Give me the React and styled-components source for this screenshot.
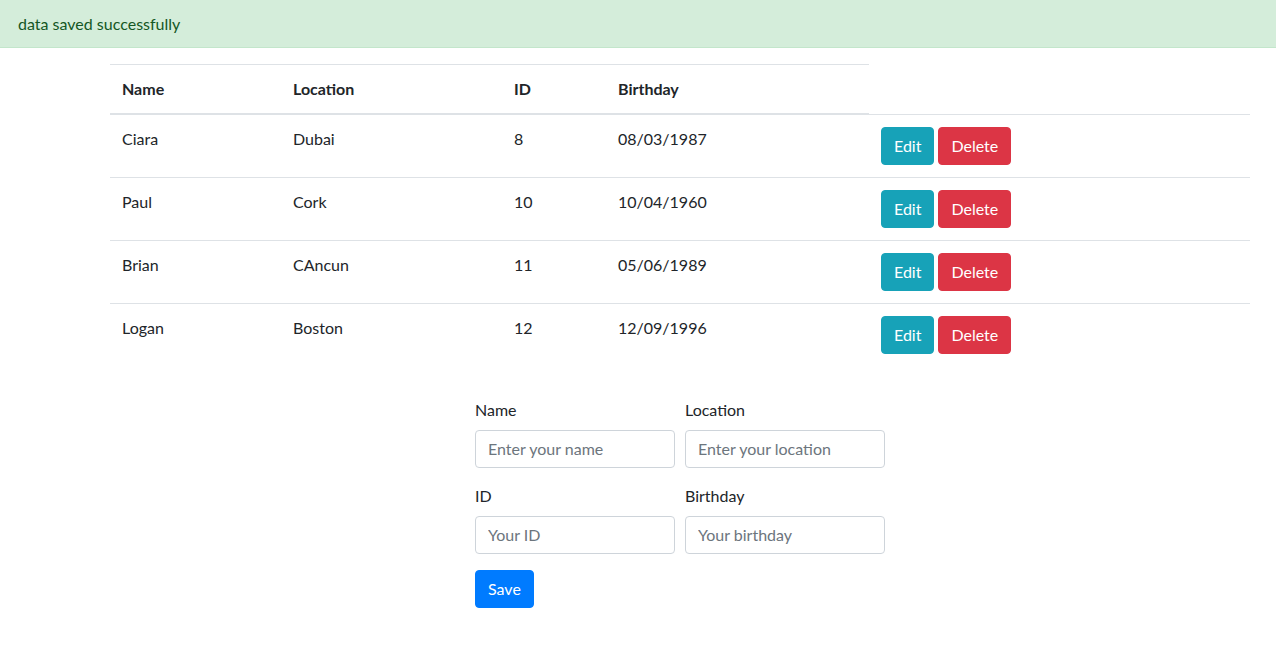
import styled, { createGlobalStyle } from "styled-components";

const people = [
    { name: "Ciara", location: "Dubai", id: 8, birthday: "08/03/1987" },
    { name: "Paul", location: "Cork", id: 10, birthday: "10/04/1960" },
    { name: "Brian", location: "CAncun", id: 11, birthday: "05/06/1989" },
    { name: "Logan", location: "Boston", id: 12, birthday: "12/09/1996" },
];

export default function App() {
    return (
        <Page>
            <GlobalStyle />
            <Alert>data saved successfully</Alert>

            <TableWrapper>
                <Table>
                    <colgroup>
                        <col style={{ width: 171 }} />
                        <col style={{ width: 221 }} />
                        <col style={{ width: 104 }} />
                        <col style={{ width: 263 }} />
                        <col />
                    </colgroup>
                    <thead>
                        <tr>
                            <Th>Name</Th>
                            <Th>Location</Th>
                            <Th>ID</Th>
                            <Th>Birthday</Th>
                        </tr>
                    </thead>
                    <tbody>
                        {people.map((p, index) => (
                            <tr key={index}>
                                <Td>{p.name}</Td>
                                <Td>{p.location}</Td>
                                <Td>{p.id}</Td>
                                <Td>{p.birthday}</Td>
                                <Td>
                                    <Actions>
                                        <Button $color="#17a2b8">Edit</Button>
                                        <Button $color="#dc3545">Delete</Button>
                                    </Actions>
                                </Td>
                            </tr>
                        ))}
                    </tbody>
                </Table>
            </TableWrapper>

            <Form>
                <FormRow>
                    <FormGroup>
                        <Label>Name</Label>
                        <Input placeholder="Enter your name" />
                    </FormGroup>
                    <FormGroup>
                        <Label>Location</Label>
                        <Input placeholder="Enter your location" />
                    </FormGroup>
                </FormRow>
                <FormRow>
                    <FormGroup>
                        <Label>ID</Label>
                        <Input placeholder="Your ID" />
                    </FormGroup>
                    <FormGroup>
                        <Label>Birthday</Label>
                        <Input placeholder="Your birthday" />
                    </FormGroup>
                </FormRow>
                <Button $color="#007bff">Save</Button>
            </Form>
        </Page>
    )
}

const GlobalStyle = createGlobalStyle`
    body {
        margin: 0;
        background: white;
        font-family: Lato, "Liberation Sans", sans-serif;
        font-size: 16px;
        line-height: 1.5;
        color: #212529;
    }
`

const Page = styled.div`
    display: flex;
    flex-direction: column;
`

const Alert = styled.div`
    background: #d4edda;
    color: #155724;
    border-bottom: 1px solid #c3e6cb;
    padding: 12px 18px 11px;
    margin-bottom: 16px;
`

const TableWrapper = styled.div`
    padding: 0 26px 0 110px;
`

const Table = styled.table`
    width: 100%;
    table-layout: fixed;
    border-collapse: collapse;
`

const Th = styled.th`
    text-align: left;
    font-weight: bold;
    padding: 12px;
    border-top: 1px solid #dee2e6;
    border-bottom: 2px solid #dee2e6;
`

const Td = styled.td`
    padding: 12px;
    vertical-align: top;
    border-top: 1px solid #dee2e6;
`

const Actions = styled.div`
    display: flex;
    gap: 4px;
`

const Button = styled.button`
    background: ${p => p.$color};
    color: white;
    border: 1px solid ${p => p.$color};
    border-radius: 4px;
    padding: 6px 12px;
    font-family: inherit;
    font-size: 16px;
    line-height: 1.5;
    cursor: pointer;
    align-self: flex-start;
`

const Form = styled.form`
    display: flex;
    flex-direction: column;
    align-self: flex-start;
    margin: 32px 0 0 475px;
`

const FormRow = styled.div`
    display: flex;
    gap: 10px;
`

const FormGroup = styled.div`
    display: flex;
    flex-direction: column;
    width: 200px;
    margin-bottom: 16px;
`

const Label = styled.label`
    margin-bottom: 8px;
`

const Input = styled.input`
    box-sizing: border-box;
    height: 38px;
    padding: 6px 12px;
    border: 1px solid #ced4da;
    border-radius: 4px;
    font-family: inherit;
    font-size: 16px;
    color: #495057;

    &::placeholder {
        color: #6c757d;
    }
`
